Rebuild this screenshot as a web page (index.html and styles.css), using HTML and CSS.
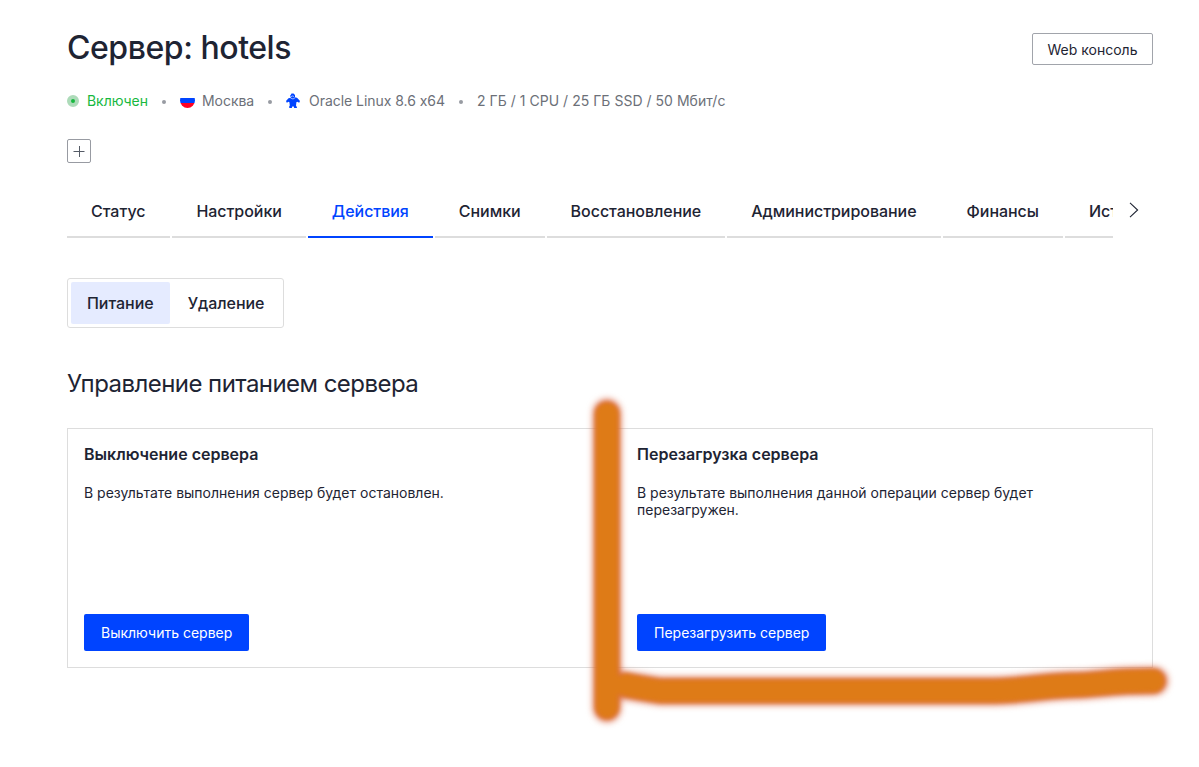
FILE: index.html
```html
<!DOCTYPE html>
<html lang="ru">
<head>
<meta charset="utf-8">
<title>Сервер: hotels</title>
<link rel="stylesheet" href="styles.css">
</head>
<body>
<main class="page">
  <header class="header">
    <h1 class="title">Сервер: hotels</h1>
    <button class="console-button">Web консоль</button>
  </header>
  <div class="meta">
    <span class="status-dot"></span>
    <span class="status-text">Включен</span>
    <span class="separator"></span>
    <svg class="flag" width="15" height="15" viewBox="0 0 15 15">
      <clipPath id="disc"><circle cx="7.500" cy="7.500" r="7.500"/></clipPath>
      <g clip-path="url(#disc)"><path fill="#fff" d="M0 0h15v5H0z"/><path fill="#0044ff" d="M0 5h15v5H0z"/><path fill="#ff0023" d="M0 10h15v5H0z"/></g>
    </svg>
    <span class="city">Москва</span>
    <span class="separator"></span>
    <svg class="os" width="14" height="16" viewBox="0 0 14 16">
      <path fill="#0044ff" d="M4 3 5 1.500 5.500.5h2L9 2v2l2.300 1L14 8l-.8 1.800-2-1-.8.4-.4 3.300.8 1.500L11 15H8.200l-.4-1.500H6.200L5.800 15H3.500L3 14l.8-1.500L3.400 9.200l-.8-.4-1.800 1L0 8l2.500-2.700L5 4.800z"/>
      <path fill="none" stroke="#fff" stroke-width=".6" d="M4.500 3.800 6.500 3 8 3.500M4.500 5l2.500 1 2.500-1.500"/>
    </svg>
    <span class="os-name">Oracle Linux 8.6 x64</span>
    <span class="separator"></span>
    <span class="config">2 ГБ / 1 CPU / 25 ГБ SSD / 50 Мбит/с</span>
  </div>
  <button class="add-button" aria-label="Добавить"><svg width="12" height="12" viewBox="0 0 12 12"><path d="M.5 6.500h11M6.500 1v11" stroke="#555b66" fill="none"/></svg></button>
  <div class="tabs-row">
    <nav class="tabs">
      <a class="tab tab-first">Статус</a><a class="tab">Настройки</a><a class="tab tab-active">Действия</a><a class="tab">Снимки</a><a class="tab">Восстановление</a><a class="tab">Администрирование</a><a class="tab">Финансы</a><a class="tab">История</a>
    </nav>
    <svg class="chevron" width="10" height="16" viewBox="0 0 10 16"><path d="M1 .8 8.600 8 1 15.200" stroke="#1e2433" stroke-width="1.100" fill="none"/></svg>
  </div>
  <div class="switcher">
    <button class="switch switch-active">Питание</button>
    <button class="switch">Удаление</button>
  </div>
  <h2 class="subtitle">Управление питанием сервера</h2>
  <section class="cards">
    <article class="card">
      <h3 class="card-title">Выключение сервера</h3>
      <p class="card-text">В результате выполнения сервер будет остановлен.</p>
      <button class="primary">Выключить сервер</button>
    </article>
    <article class="card">
      <h3 class="card-title">Перезагрузка сервера</h3>
      <p class="card-text">В результате выполнения данной операции сервер будет перезагружен.</p>
      <button class="primary">Перезагрузить сервер</button>
    </article>
  </section>
</main>
<svg class="marker" width="1199" height="767" viewBox="0 0 1199 767">
  <defs>
    <filter id="soft" x="0" y="0" width="1199" height="767" filterUnits="userSpaceOnUse" color-interpolation-filters="sRGB"><feGaussianBlur stdDeviation="3.800"/></filter>
    <filter id="core" x="0" y="0" width="1199" height="767" filterUnits="userSpaceOnUse" color-interpolation-filters="sRGB"><feGaussianBlur stdDeviation="2"/></filter>
  </defs>
  <g fill="none" stroke-linecap="round" stroke-linejoin="round">
    <path class="stroke-edge" filter="url(#soft)" d="M607 413V708M622 685Q640 688 660 691H995C1030 690 1050 685 1080 685C1105 684 1110 681 1154 681"/>
    <path class="stroke-core" filter="url(#core)" d="M607 414V707M626 685Q640 688 660 691H995C1030 690 1050 685 1080 685C1105 684 1110 681 1153 681"/>
  </g>
</svg>
</body>
</html>
```
FILE: styles.css
```css
* { box-sizing: border-box; }
body { margin: 0; height: 767px; overflow: hidden; background: #fff; color: #1e2433; font-family: Inter, "Liberation Sans", sans-serif; font-feature-settings: "calt" 0; }
h1, h2, h3, p { margin: 0; }
button { font-family: inherit; font-feature-settings: inherit; color: inherit; background: none; border: 0; padding: 0; margin: 0; white-space: nowrap; }
.page { width: 1086px; margin-left: 67px; padding-top: 28px; display: flex; flex-direction: column; align-items: flex-start; }
.header { width: 100%; height: 40px; display: flex; justify-content: space-between; align-items: flex-start; }
.title { font-size: 32px; line-height: 40px; font-weight: 500; letter-spacing: -0.45px; }
.console-button { width: 121px; height: 32px; margin-top: 5px; border: 1px solid #a1a4ab; border-radius: 2px; font-size: 14px; }
.meta { height: 20px; margin-top: 23px; display: flex; align-items: center; font-size: 14px; line-height: 20px; color: #6c7078; white-space: nowrap; }
.status-dot { width: 12px; height: 12px; border-radius: 50%; border: 4px solid #addbb9; background: #17b83f; margin-right: 8px; }
.status-text { width: 61px; color: #17b83f; letter-spacing: -0.05px; }
.separator { width: 4px; height: 4px; border-radius: 50%; background: #989ba2; margin: 2px 14px 0; }
.flag { margin: -1px 7px 0 0; }
.city { width: 52px; letter-spacing: -0.05px; }
.os { margin-right: 9px; }
.os-name { width: 136px; letter-spacing: -0.04px; }
.config { letter-spacing: 0.03px; }
.add-button { width: 24px; height: 24px; margin-top: 28px; border: 1px solid #989ba2; border-radius: 2px; display: flex; align-items: center; justify-content: center; }
.tabs-row { width: 100%; height: 53px; margin-top: 22px; display: flex; }
.tabs { width: 1046px; overflow: hidden; display: flex; gap: 2px; }
.tab { flex: none; padding: 0 24px; border-bottom: 2px solid #ddd; font-size: 16px; font-weight: 500; line-height: 53px; height: 53px; letter-spacing: -0.04px; }
.tab-first { min-width: 103.4px; letter-spacing: 0; }
.tab-active { color: #0044ff; border-color: #0044ff; }
.chevron { margin: 17px 0 0 16px; }
.switcher { width: 217px; height: 50px; margin-top: 40px; padding: 3px; border: 1px solid #ddd; border-radius: 3px; display: flex; gap: 2px; }
.switch { height: 42px; padding: 0 16px; border-radius: 2px; font-size: 16px; font-weight: 500; letter-spacing: -0.04px; }
.switch-active { width: 99px; background: #e5ebff; }
.subtitle { margin-top: 40px; font-size: 24px; line-height: 32px; font-weight: 400; letter-spacing: -0.55px; }
.cards { width: 100%; height: 240px; margin-top: 28px; border: 1px solid #ddd; display: grid; grid-template-columns: 553px 1fr; }
.card { padding: 16px; display: flex; flex-direction: column; align-items: flex-start; }
.card-title { font-size: 16px; line-height: 19px; font-weight: 600; }
.card-text { width: 440px; margin-top: 20px; font-size: 14px; line-height: 17px; }
.primary { margin-top: auto; height: 37px; padding: 0 17px; border-radius: 2px; background: #0044ff; color: #fff; font-size: 14px; }
.marker { position: absolute; left: 0; top: 0; pointer-events: none; }
.stroke-edge { stroke: #dc6a46; stroke-width: 27px; }
.stroke-core { stroke: #de7b17; stroke-width: 23px; }
```
